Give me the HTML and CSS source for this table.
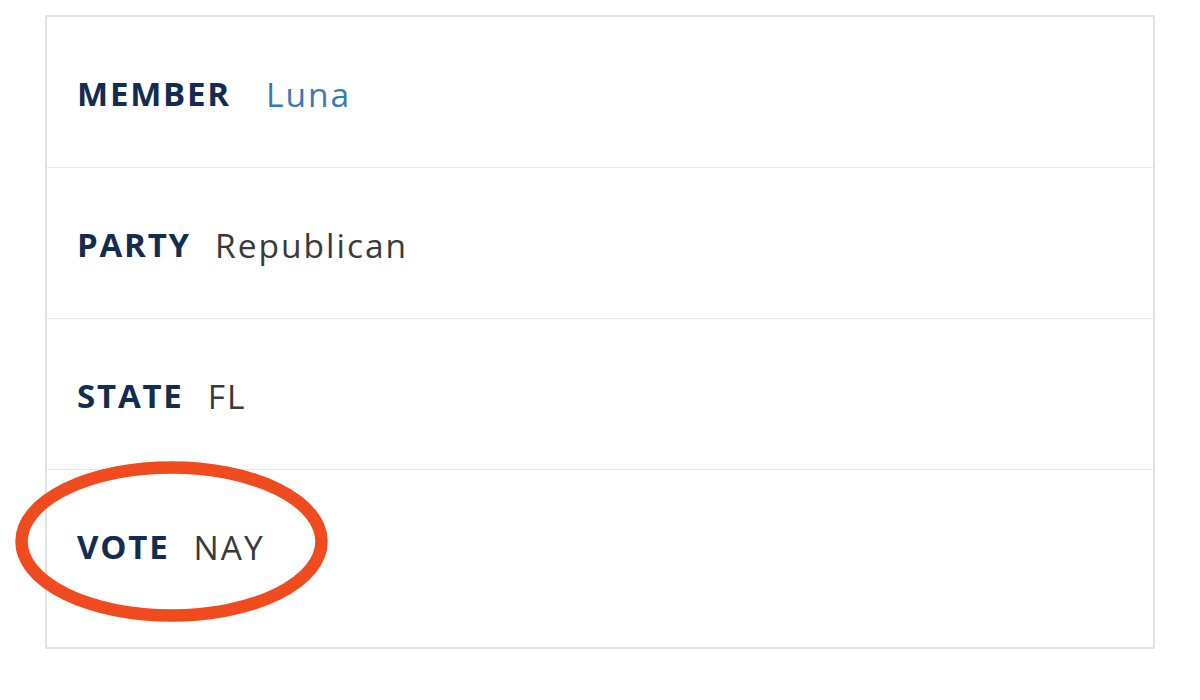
FILE: index.html
```html
<!DOCTYPE html>
<html lang="en">
<head>
<meta charset="utf-8">
<title>Vote record</title>
<link rel="stylesheet" href="styles.css">
</head>
<body>
<div class="page">
  <div class="card">
    <div class="row">
      <span class="label">MEMBER</span>
      <a class="value link" href="#">Luna</a>
    </div>
    <div class="row">
      <span class="label">PARTY</span>
      <span class="value">Republican</span>
    </div>
    <div class="row">
      <span class="label">STATE</span>
      <span class="value">FL</span>
    </div>
    <div class="row last">
      <span class="label">VOTE</span>
      <span class="value">NAY</span>
      <svg class="circle" width="313" height="161" viewBox="0 0 313 161" aria-hidden="true">
        <ellipse cx="156.5" cy="80.5" rx="150" ry="74" fill="none" stroke="#f04a1f" stroke-width="12.5"/>
      </svg>
    </div>
  </div>
</div>
</body>
</html>
```
FILE: styles.css
```css
html, body {
  margin: 0;
  padding: 0;
  background: #ffffff;
}
.page {
  padding: 15px 45px 0 45px;
  width: 1110px;
  font-family: "Open Sans", "Noto Sans", sans-serif;
}
.card {
  border: 2px solid #e3e3e3;
  background: #fff;
}
.row {
  position: relative;
  display: flex;
  align-items: center;
  height: 151px;
  padding-left: 30px;
  padding-top: 4px;
  border-bottom: 1px solid #e6e6e6;
  box-sizing: border-box;
}
.row.last {
  border-bottom: none;
  height: 177px;
  align-items: flex-start;
  padding-top: 53px;
}
.label {
  font-weight: 700;
  font-size: 33px;
  letter-spacing: 1.8px;
  color: #132c4f;
  margin-right: 24px;
  line-height: 48px;
}
.value {
  font-weight: 400;
  font-size: 33.5px;
  letter-spacing: 2px;
  color: #3a3a3a;
  line-height: 48px;
  text-decoration: none;
}
.value.link {
  color: #3b79b2;
  margin-left: 11px;
}
.circle {
  position: absolute;
  left: -32px;
  top: -9px;
}
```
